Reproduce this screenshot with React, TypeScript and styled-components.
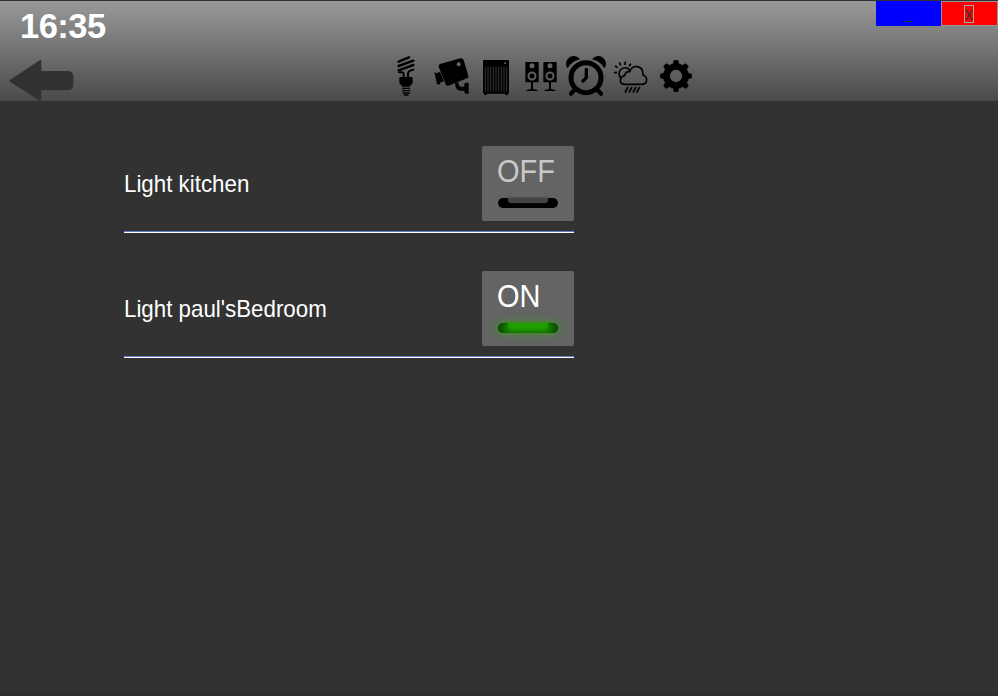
import React from "react";
import styled, { createGlobalStyle } from "styled-components";

const GlobalStyle = createGlobalStyle`
  * { box-sizing: border-box; }
  html, body { margin: 0; padding: 0; background: #323232; }
  body { font-family: "Liberation Sans", Arial, sans-serif; overflow: hidden; }
`;

const Screen = styled.div`
  width: 998px;
  height: 696px;
  background: #323232;
  border-top: 1px solid #312f31;
  border-bottom: 4px solid #2f2d2f;
`;

const Header = styled.header`
  display: grid;
  grid-template-columns: 384px 1fr 122px;
  height: 100px;
  background: linear-gradient(#999999, #4a4a4a);
`;

const HeaderLeft = styled.div`
  display: flex;
  flex-direction: column;
`;

const Clock = styled.div`
  height: 59px;
  padding: 5px 0 0 20px;
  font-size: 34.5px;
  line-height: 40px;
  font-weight: bold;
  letter-spacing: -0.5px;
  color: #fff;
`;

const BackButton = styled.button`
  display: block;
  width: 66px;
  height: 41px;
  margin-left: 9px;
  padding: 0;
  border: 0;
  background: none;
  svg { display: block; }
`;

const Nav = styled.nav`
  display: flex;
  gap: 1px;
  padding-top: 51px;
`;

const NavIcon = styled.svg`
  width: 44px;
  height: 48px;
  display: block;
`;

const WindowButtons = styled.div`
  display: flex;
  height: 25px;
`;

const WindowButton = styled.button<{ $kind: "minimize" | "close" }>`
  display: flex;
  align-items: center;
  justify-content: center;
  width: ${(p) => (p.$kind === "close" ? 57 : 65)}px;
  padding: 0;
  border: ${(p) => (p.$kind === "close" ? "1px solid #96969b" : "0")};
  background: ${(p) => (p.$kind === "close" ? "#ff0000" : "#0000ff")};
  color: #323232;
  font: 14px/20px "Liberation Sans", Arial, sans-serif;
`;

const CloseGlyph = styled.span`
  display: flex;
  justify-content: center;
  width: 10px;
  height: 18px;
  margin-left: -1px;
  border: 1px solid #a9a9ae;
  line-height: 18px;
  span { transform: scaleX(0.85); }
`;

const DeviceList = styled.main`
  width: 450px;
  margin: 45px 0 0 124px;
`;

const DeviceRow = styled.section`
  display: flex;
  justify-content: space-between;
  height: 87px;
  margin-bottom: 38px;
  border-bottom: 1px solid #fff;
  box-shadow: inset 0 -1px 0 #5d7fc4;
`;

const DeviceName = styled.span`
  padding-top: 25px;
  font-size: 24px;
  line-height: 26px;
  transform: scaleX(0.93);
  transform-origin: left;
  color: #fff;
  white-space: nowrap;
`;

const Toggle = styled.button`
  width: 92px;
  height: 75px;
  padding: 8px 0 0 16px;
  border: 0;
  border-radius: 2px;
  background: #646464;
  text-align: left;
  display: flex;
  flex-direction: column;
`;

const ToggleText = styled.span<{ $on: boolean }>`
  height: 44px;
  margin-left: -1px;
  font: 31px/35px "Liberation Sans", Arial, sans-serif;
  transform: scaleX(0.935);
  transform-origin: left;
  color: ${(p) => (p.$on ? "#fff" : "#c8c8c8")};
`;

const Lamp = styled.span<{ $on: boolean }>`
  width: 60px;
  height: 10px;
  border-radius: 5px;
  background: ${(p) =>
    p.$on
      ? "linear-gradient(90deg, #0a4d00, #1b8a00 20%, #1e9800 50%, #1b8a00 80%, #0a4d00)"
      : "#000"};
  box-shadow: ${(p) =>
    p.$on ? "inset 0 0 4px #0a4d00, 0 0 9px 1px rgba(50, 160, 24, 0.8)" : "none"};
  display: flex;
  justify-content: center;
`;

const LampCore = styled.span<{ $on: boolean }>`
  width: 40px;
  height: 5px;
  border-radius: 0 0 3px 3px;
  background: ${(p) => (p.$on ? "#209e00" : "#444")};
  box-shadow: ${(p) => (p.$on ? "0 1px 3px #209e00" : "0 0 2px #222")};
`;

const BackArrow = () => (
  <svg width="66" height="41" viewBox="27 180 198 123">
    <path
      fill="#323232"
      d="M30 240 L117 182 Q124 177 124 184 V213 H203 Q220 213 220 230 V254 Q220 271 203 271 H124 V298 Q124 306 117 301 L30 245 Q28 242 30 240Z"
    />
  </svg>
);

const BulbIcon = () => (
  <NavIcon viewBox="-3 6 132 144">
    <g fill="none" stroke="#000" strokeWidth="7.5" strokeLinecap="round">
      <path d="M41 35 L72 22M41 48 L85 32M41 61 L85 45" />
      <path strokeWidth="6" d="M42 67 H50 Q56 67 56 74 V84M85 59 L76 62 Q69 65 69 72 V84" />
    </g>
    <path d="M45 81 H80 Q83 81 83 84 V99 L74 110 H52 L43 99 V84 Q43 81 45 81Z" />
    <path fill="none" stroke="#000" strokeWidth="4.2" strokeLinecap="round" d="M53 115 H74M53 122 H74M54 129 H73M58 135 H69" />
  </NavIcon>
);

const CameraIcon = () => (
  <NavIcon viewBox="132 6 132 144">
    <path
      fillRule="evenodd"
      d="M165 42 L226 25 Q233 24 236 30 L250 78 Q251 83 246 85 L190 107 Q184 109 182 103 L161 50 Q160 45 165 42ZM221 37 a6 6 0 1 0 .1 0Z"
    />
    <path d="M148 66 L155 70 L165 65 L177 94 L167 97 L163 104 L156 102Z" />
    <path d="M210 100 L220 96 Q220 110 227 110 H238 V102 Q239 98 243 98 H251 V131 H243 Q238 130 238 122 H225 Q211 121 210 100Z" />
  </NavIcon>
);

const RadiatorIcon = () => (
  <NavIcon viewBox="-3 6 132 144">
    <rect x="24" y="30" width="78" height="101" rx="3" />
    <path d="M27 129 H36 V135 H27ZM90 129 H99 V135 H90Z" />
    <rect x="88" y="37" width="5" height="5" fill="#666" />
    <path stroke="#3c3c3c" strokeWidth="2.5" d="M31 50V125M39 50V125M47 50V125M55 50V125M63 50V125M71 50V125M79 50V125M87 50V125M95 50V125" />
  </NavIcon>
);

const Speaker = ({ x }: { x: number }) => (
  <g transform={`translate(${x} 0)`}>
    <rect x="-20" y="36" width="40" height="61" rx="2" />
    <circle cy="47" r="7.5" fill="#656565" />
    <circle cy="78" r="10.5" fill="none" stroke="#5f5f5f" strokeWidth="6" />
    <path d="M-3 96 H3 V117 Q15 118 19 123 H-19 Q-15 118 -3 117Z" />
  </g>
);

const SpeakersIcon = () => (
  <NavIcon viewBox="132 6 132 144">
    <Speaker x={171} />
    <Speaker x={225} />
  </NavIcon>
);

const AlarmIcon = () => (
  <NavIcon viewBox="6 6 132 144">
    <circle cx="72" cy="83" r="45" fill="none" stroke="#000" strokeWidth="15" />
    <path d="M17 55 C3 36 22 16 37 18 Q48 19 54 28 Q28 34 17 55ZM127 55 C141 36 122 16 107 18 Q96 19 90 28 Q116 34 127 55Z" />
    <path fill="none" stroke="#000" strokeLinecap="round" strokeWidth="13" d="M36 121 L27 131M107 121 L117 131" />
    <path fill="none" stroke="#000" strokeLinecap="round" strokeLinejoin="round" strokeWidth="10" d="M73 58 V83 L63 93" />
  </NavIcon>
);

const WeatherIcon = () => (
  <NavIcon viewBox="-3 6 132 144">
    <g fill="none" stroke="#000" strokeWidth="5">
      <path d="M43 103 Q31 102 31 91 Q31 80 44 77 Q47 63 59 65 Q66 47 82 50 Q100 53 99 75 Q111 80 110 91 Q108 103 95 103Z" />
      <path d="M31 82 Q23 70 31 60 Q39 51 51 54 Q58 57 61 64" />
      <path d="M12 68 H21M15 48 L23 53M28 37 L32 46M46 35 L45 45M63 41 L57 49" />
      <path d="M54 111 L45 128M66 111 L57 128M78 111 L69 128M89 111 L80 128" />
    </g>
  </NavIcon>
);

const GearIcon = () => (
  <NavIcon viewBox="132 6 132 144">
    <circle cx="198" cy="78" r="28.5" fill="none" stroke="#000" strokeWidth="20" />
    {[0, 45, 90, 135, 180, 225, 270, 315].map((angle) => (
      <path
        key={angle}
        transform={`rotate(${angle} 198 78)`}
        d="M184 45 L189 41 L191 31 Q198 29 205 31 L207 41 L212 45Z"
      />
    ))}
  </NavIcon>
);

const devices = [
  { name: "Light kitchen", on: false },
  { name: "Light paul'sBedroom", on: true },
];

export default function App() {
  return (
    <>
      <GlobalStyle />
      <Screen>
        <Header>
          <HeaderLeft>
            <Clock>16:35</Clock>
            <BackButton aria-label="Back">
              <BackArrow />
            </BackButton>
          </HeaderLeft>
          <Nav>
            <BulbIcon />
            <CameraIcon />
            <RadiatorIcon />
            <SpeakersIcon />
            <AlarmIcon />
            <WeatherIcon />
            <GearIcon />
          </Nav>
          <WindowButtons>
            <WindowButton $kind="minimize">_</WindowButton>
            <WindowButton $kind="close">
              <CloseGlyph>
                <span>X</span>
              </CloseGlyph>
            </WindowButton>
          </WindowButtons>
        </Header>
        <DeviceList>
          {devices.map((device) => (
            <DeviceRow key={device.name}>
              <DeviceName>{device.name}</DeviceName>
              <Toggle>
                <ToggleText $on={device.on}>{device.on ? "ON" : "OFF"}</ToggleText>
                <Lamp $on={device.on}>
                  <LampCore $on={device.on} />
                </Lamp>
              </Toggle>
            </DeviceRow>
          ))}
        </DeviceList>
      </Screen>
    </>
  );
}
